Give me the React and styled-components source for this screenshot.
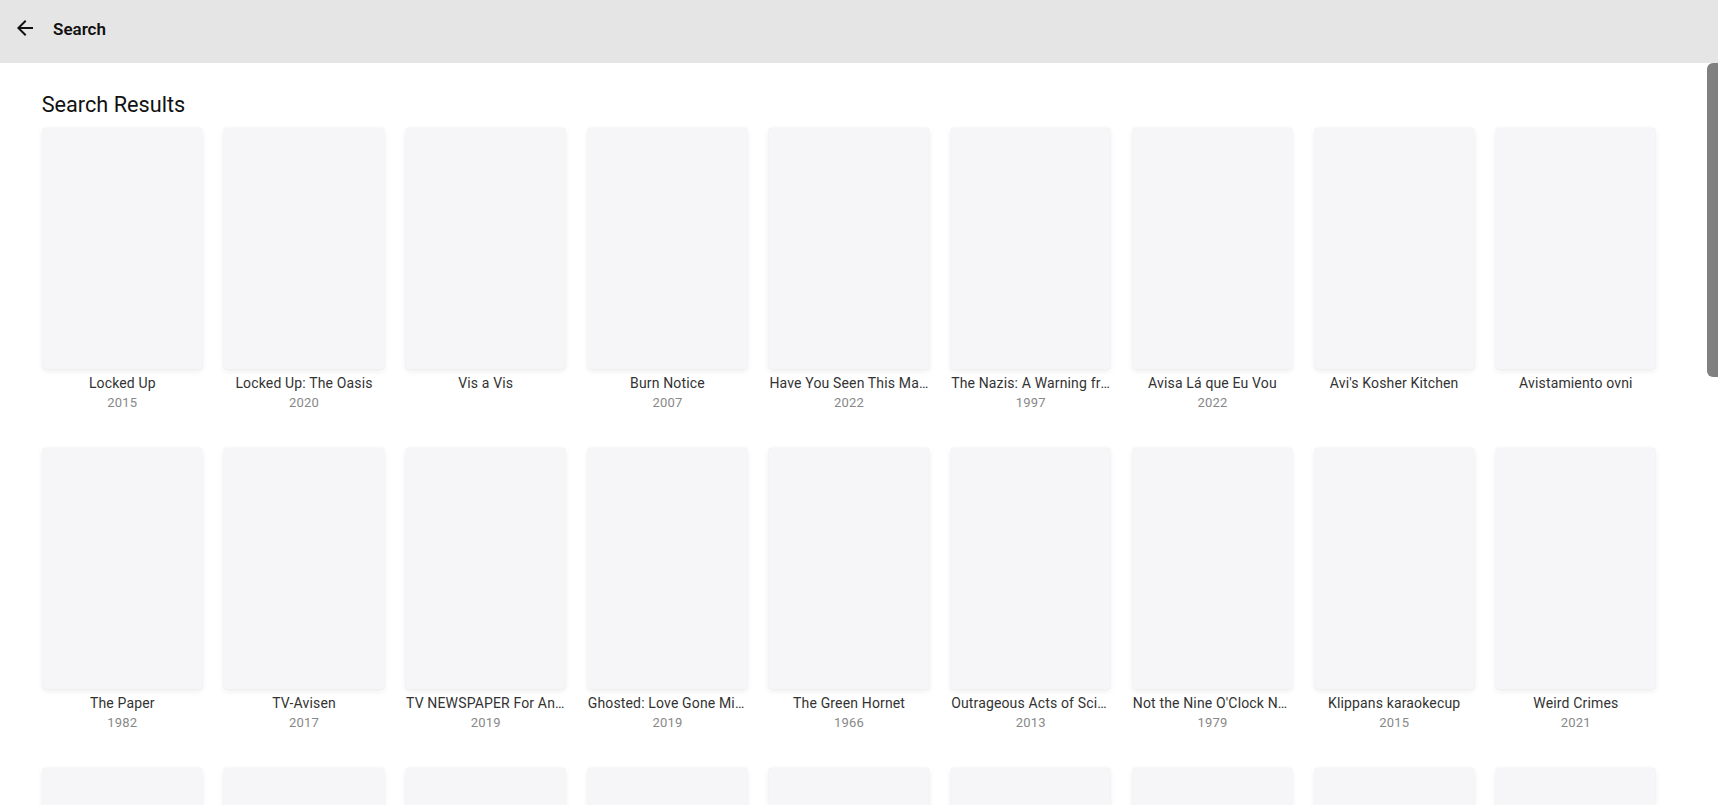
import React from 'react';
import styled, { createGlobalStyle } from 'styled-components';

const results = [
  { title: 'Locked Up', year: '2015' },
  { title: 'Locked Up: The Oasis', year: '2020' },
  { title: 'Vis a Vis', year: '' },
  { title: 'Burn Notice', year: '2007' },
  { title: 'Have You Seen This Man? The Disappearance', year: '2022' },
  { title: 'The Nazis: A Warning from History', year: '1997' },
  { title: 'Avisa Lá que Eu Vou', year: '2022' },
  { title: "Avi's Kosher Kitchen", year: '' },
  { title: 'Avistamiento ovni', year: '' },
  { title: 'The Paper', year: '1982' },
  { title: 'TV-Avisen', year: '2017' },
  { title: 'TV NEWSPAPER For Animals', year: '2019' },
  { title: 'Ghosted: Love Gone Missing', year: '2019' },
  { title: 'The Green Hornet', year: '1966' },
  { title: 'Outrageous Acts of Science', year: '2013' },
  { title: "Not the Nine O'Clock News", year: '1979' },
  { title: 'Klippans karaokecup', year: '2015' },
  { title: 'Weird Crimes', year: '2021' },
  { title: 'Avisen', year: '2010' },
  { title: 'The Newsroom', year: '2012' },
  { title: 'News Flash', year: '2018' },
  { title: 'Vis ta vie', year: '2016' },
  { title: 'Lock Up Raw', year: '2008' },
  { title: 'The Visitor', year: '2007' },
  { title: 'Avis de recherche', year: '2019' },
  { title: 'Daily Paper', year: '2014' },
  { title: 'Evening News', year: '2003' },
  { title: 'Aviso', year: '2021' },
  { title: 'The Lock', year: '2011' },
  { title: 'Visions', year: '1998' },
  { title: 'Paper Moon', year: '1974' },
  { title: 'Headlines', year: '2005' },
  { title: 'The Oasis', year: '2016' },
  { title: 'Night Desk', year: '2013' },
  { title: 'Avenue 5', year: '2020' },
  { title: 'Breaking News', year: '2009' },
  { title: 'Unsolved Crimes', year: '2018' },
  { title: 'Vista', year: '2001' },
  { title: 'Newsreel', year: '1990' },
  { title: 'Lockdown', year: '2020' },
  { title: 'The Press', year: '2018' },
  { title: 'Karaoke Nights', year: '2012' },
  { title: 'Science Acts', year: '2015' },
  { title: 'Hornet Tales', year: '1999' },
  { title: 'The Warning', year: '2004' },
];

const App = () => (
  <>
    <GlobalStyle />
    <Page>
      <Header>
        <BackButton aria-label="Back">
          <svg width="24" height="24" viewBox="0 0 24 24">
            <path fill="#111" d="M20 11H7.83l5.59-5.59L12 4l-8 8 8 8 1.41-1.41L7.83 13H20v-2z" />
          </svg>
        </BackButton>
        <HeaderTitle>Search</HeaderTitle>
      </Header>
      <Body>
        <Content>
          <Heading>Search Results</Heading>
          <Grid>
            {results.map((item, i) => (
              <Card key={i}>
                <Poster />
                <Title>{item.title}</Title>
                <Year>{item.year}</Year>
              </Card>
            ))}
          </Grid>
        </Content>
        <ScrollThumb />
      </Body>
    </Page>
  </>
);

export default App;

const GlobalStyle = createGlobalStyle`
  html, body {
    margin: 0;
    padding: 0;
    height: 100%;
    overflow: hidden;
    font-family: Roboto, "Liberation Sans", sans-serif;
    background: #fff;
  }
  #root {
    height: 100%;
  }
`;

const Page = styled.div`
  display: flex;
  flex-direction: column;
  height: 100vh;
`;

const Header = styled.header`
  flex: 0 0 63px;
  display: flex;
  align-items: flex-start;
  gap: 16px;
  padding: 16px 13px 0;
  box-sizing: border-box;
  background: #e5e5e5;
`;

const BackButton = styled.button`
  display: flex;
  padding: 0;
  border: none;
  background: none;
  cursor: pointer;
`;

const HeaderTitle = styled.h1`
  margin: 1px 0 0;
  font-size: 17px;
  line-height: 24px;
  font-weight: 600;
  color: #111;
`;

const Body = styled.div`
  position: relative;
  flex: 1;
  min-height: 0;
  display: flex;
`;

const Content = styled.main`
  flex: 1;
  overflow-y: auto;
  scrollbar-width: none;
  padding: 28px 42px 90px 42.7px;
`;

const ScrollThumb = styled.div`
  position: absolute;
  top: 0;
  right: 0;
  width: 11px;
  height: 314px;
  background: #808080;
  border-radius: 6px 0 0 6px;
`;

const Heading = styled.h2`
  margin: 0 0 9px -1px;
  font-size: 21.7px;
  line-height: 28px;
  font-weight: 400;
  color: #111;
`;

const Grid = styled.div`
  display: grid;
  grid-template-columns: repeat(9, 159.3px);
  column-gap: 22.4px;
  row-gap: 35px;
`;

const Card = styled.div`
  display: flex;
  flex-direction: column;
  align-items: center;
  min-width: 0;
`;

const Poster = styled.div`
  flex-shrink: 0;
  width: 100%;
  height: 241px;
  border-radius: 2px;
  background: #f6f6f8;
  box-shadow: 0 2px 6px rgba(0, 0, 0, 0.08), 0 0 1px rgba(0, 0, 0, 0.12);
`;

const Title = styled.div`
  width: 100%;
  margin-top: 4px;
  font-size: 14px;
  line-height: 20px;
  letter-spacing: 0.15px;
  color: #333;
  text-align: center;
  white-space: nowrap;
  overflow: hidden;
  text-overflow: ellipsis;
`;

const Year = styled.div`
  min-height: 20px;
  font-size: 13px;
  line-height: 20px;
  letter-spacing: 0.2px;
  color: #888;
`;
